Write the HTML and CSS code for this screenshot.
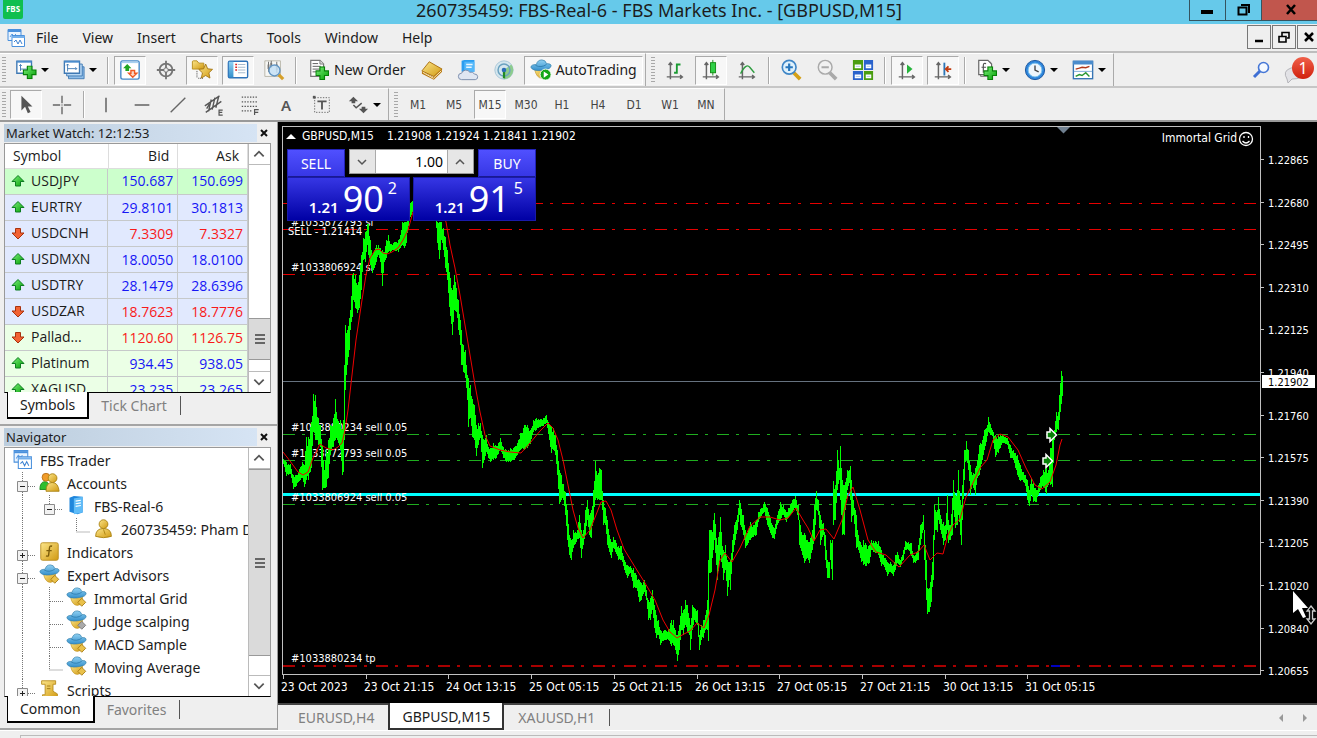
FILE: index.html
```html
<!DOCTYPE html>
<html lang="en">
	<head>
		<meta charset="utf-8">
		<meta name="viewport" content="width=device-width, initial-scale=1.0">
		<title>260735459: FBS-Real-6 - FBS Markets Inc. - [GBPUSD,M15]</title>
		<link rel="stylesheet" href="styles.css">
	</head>

	<body>
		<svg class="defs" aria-hidden="true">
			<linearGradient id="gold" x1="0" y1="0" x2="1" y2="1"><stop offset="0" stop-color="#fbe58a"/><stop offset="1" stop-color="#d19a12"/></linearGradient>
			<linearGradient id="blue" x1="0" y1="0" x2="0" y2="1"><stop offset="0" stop-color="#8fd0f2"/><stop offset="1" stop-color="#3590cc"/></linearGradient>
			<linearGradient id="green" x1="0" y1="0" x2="1" y2="1"><stop offset="0" stop-color="#7df07d"/><stop offset="1" stop-color="#05a005"/></linearGradient>

			<symbol id="i-app" viewBox="0 0 20 20"><path d="M2 1.500h13v11H2z" fill="#eaf4ff" stroke="#4a90dc"/><path d="M2 2h13v2H2z" fill="#4a90dc"/><path d="M4 9l2-3 2 2 2-2" fill="none" stroke="#5b9be0"/><path d="M6 7.500h12.500v11H6z" fill="#fff" stroke="#4a90dc"/><path d="M6 8h12.500v2H6z" fill="#75b0ec"/><path d="M8 14l2-2 2 4 2-4 2 4" fill="none" stroke="#3d82d2"/></symbol>
			<symbol id="i-plus" viewBox="0 0 12 12"><path d="M4 .5h4V4h3.500v4H8v3.500H4V8H.5V4H4z" fill="url(#green)" stroke="#078007"/></symbol>
			<symbol id="i-newchart" viewBox="0 0 24 24"><path d="M2 2.500h16v13H2z" fill="#fff" stroke="#3f79b4" stroke-width="1.500"/><path d="M2 2h16v2H2z" fill="#4b8ccc"/><path d="M6 6v7M4.500 7.500L6 6l1.500 1.500M6 11h8M13 9.500l1.500 1.500" fill="none" stroke="#3f79b4"/><use href="#i-plus" x="8" y="7" width="16" height="15"/></symbol>
			<symbol id="i-profiles" viewBox="0 0 24 24"><path d="M6 8.500h17v13H6z" fill="#8fbde8" stroke="#3f79b4"/><path d="M4 5.500h17v13H4z" fill="#b8d7f3" stroke="#3f79b4"/><path d="M1.500 2.500H18v13H1.500z" fill="#fff" stroke="#3f79b4" stroke-width="1.500"/><path d="M1.500 2H18v2H1.500z" fill="#4b8ccc"/><path d="M5 5.500v8M3.500 7L5 5.500 6.500 7M5 10.500h10M13.500 9l1.500 1.500-1.500 1.500" fill="none" stroke="#3f79b4"/></symbol>
			<symbol id="i-market" viewBox="0 0 24 24"><rect x="2" y="2" width="20" height="20" rx="2" fill="#fff" stroke="#4488c8" stroke-width="1.500"/><path d="M3 3h18v1.500H3z" fill="#a8d0f0"/><path d="M9 5.500l4.500 4.500H11v3H7v-3H4.500z" fill="#1fa51f"/><path d="M15 20l4.500-4.500H17v-3h-4v3h-2.500z" fill="#fbd9c8" stroke="#ef5a24" stroke-width="1.500"/></symbol>
			<symbol id="i-aim" viewBox="0 0 24 24"><g fill="none" stroke="#757575"><circle cx="12" cy="12" r="7" stroke-width="2"/><circle cx="12" cy="12" r="2.500"/><path d="M12 2v8M12 14v8M2 12h8M14 12h8" stroke-width="2"/></g></symbol>
			<symbol id="i-star" viewBox="0 0 24 24"><path d="M1.500 3q0-1 1-1h4l2 2.500h5.500V11H1.500z" fill="url(#gold)" stroke="#b78c1d"/><path d="M6.500 13v8M8 21h5" stroke="#333" stroke-dasharray="1 1"/><path d="M16 5.500l2.200 5.200 5.300.6-4 3.800 1.200 5.700L16 18l-4.700 2.800 1.200-5.700-4-3.800 5.300-.6z" fill="url(#gold)" stroke="#a57614"/></symbol>
			<symbol id="i-navi" viewBox="0 0 24 24"><rect x="1.500" y="2.500" width="21" height="18" rx="1.500" fill="#fff" stroke="#2f72b8" stroke-width="1.500"/><path d="M2 3h5v17H2z" fill="url(#blue)"/><path d="M9 6h2M9 9h2M9 12h2" stroke="#d22" stroke-width="1.500"/><path d="M12 6h8M12 9h8M12 12h8M12 15h8" stroke="#9fb4c8"/></symbol>
			<symbol id="i-tester" viewBox="0 0 24 24"><path d="M2 2h17v17H2z" fill="#f7f7f4" stroke="#b7b3a6"/><path d="M6 3v11M9 2v8M15 3v12" stroke="#666"/><path d="M5 6h2v5H5zM8 4h2v5H8zM14 6h2v6h-2z" fill="#777"/><path d="M17 17l5 5" stroke="#d6a02a" stroke-width="3.500"/><circle cx="12.500" cy="12.500" r="6" fill="#c4e1f6" fill-opacity=".85" stroke="#6395c2" stroke-width="1.500"/></symbol>
			<symbol id="i-doc" viewBox="0 0 24 24"><path d="M3 1.500h10l4 4V19H3z" fill="#fff" stroke="#777" stroke-width="1.300"/><path d="M13 1.500v4h4" fill="#ddd" stroke="#777"/><path d="M5 5h6M5 8h9M5 11h9M5 14h5" stroke="#555"/><use href="#i-plus" x="8" y="8" width="15" height="15"/></symbol>
			<symbol id="i-book" viewBox="0 0 24 24"><path d="M1 13l8-10 14 8-9 8z" fill="url(#gold)" stroke="#a76c0c"/><path d="M1 13l12 6.500L22.500 11l.5 3-9 8.500L1 16z" fill="#b8770f"/><path d="M2 14.500l11.500 6.500 8.500-8" fill="none" stroke="#fff4c8"/></symbol>
			<symbol id="i-cloud" viewBox="0 0 24 24"><path d="M5 2l3-1h11v13H5z" fill="#2a9df0"/><path d="M8 3h11v11H8z" fill="#54b8fa"/><path d="M10 6h7M10 9h6" stroke="#e9f6ff" stroke-width="1.500"/><path d="M5 22.500a3.500 3.500 0 0 1 0-7 5 5 0 0 1 9-1 4 4 0 0 1 5 2 3 3 0 0 1 1 6z" fill="#dfe6f2" stroke="#7588a8"/></symbol>
			<symbol id="i-signal" viewBox="0 0 24 24"><circle cx="12" cy="12" r="10" fill="#d4e6ee" stroke="#a6c5d6"/><path d="M12 12v10a10 10 0 0 0 8-16z" fill="#8dcc8d"/><circle cx="12" cy="12" r="6.500" fill="none" stroke="#6aa1bf" stroke-width="1.600"/><path d="M12 12v9" stroke="#228b22" stroke-width="2.500"/><circle cx="12" cy="12" r="2.500" fill="#2a6db6"/></symbol>
			<symbol id="i-hat" viewBox="0 0 24 24"><path d="M5 11q7 4 14-1 0 11-6 11-6 0-8-10z" fill="url(#gold)" stroke="#c29424" stroke-width=".7"/><path d="M1 9q0-3 6-3 1-5 6-5 4 0 5 4 5 0 5 2 0 4-8 5-12 2-14-3z" fill="url(#blue)" stroke="#3682ae" stroke-width=".8"/><path d="M6 7q6 3 12-1" fill="none" stroke="#2f7fb0"/></symbol>
			<symbol id="i-auto" viewBox="0 0 24 24"><use href="#i-hat"/><circle cx="17" cy="17" r="6" fill="#14a614" stroke="#fff"/><path d="M15 13.500v7l5-3.500z" fill="#fff"/></symbol>
			<symbol id="i-ea" viewBox="0 0 24 24"><use href="#i-hat"/><path d="M18 13l4.500 4.500L18 22l-4.500-4.500z" fill="#eac14a" stroke="#a67a12"/></symbol>
			<symbol id="i-eaoff" viewBox="0 0 24 24"><use href="#i-hat"/><path d="M18 13l4.500 4.500L18 22l-4.500-4.500z" fill="#aaa" stroke="#777"/></symbol>
			<symbol id="axes" viewBox="0 0 24 24"><path d="M7 4v18M3 19.500h17M5 6.500L7 4l2 2.500M17.500 17.500l2.500 2-2.500 2" fill="none" stroke="#666" stroke-width="1.600"/></symbol>
			<symbol id="i-bars" viewBox="0 0 24 24"><use href="#axes"/><path d="M14 5v11M11 15h3M14 6h4" fill="none" stroke="#1a9a32" stroke-width="2"/></symbol>
			<symbol id="i-candle" viewBox="0 0 24 24"><use href="#axes"/><path d="M14 1v17" stroke="#118a11"/><rect x="11.500" y="4" width="5.500" height="11" fill="#2fd046" stroke="#118a11"/></symbol>
			<symbol id="i-line" viewBox="0 0 24 24"><use href="#axes"/><path d="M5 16q6-12 10-7l5 6" fill="none" stroke="#2d9c3f" stroke-width="1.500"/></symbol>
			<symbol id="i-zoomin" viewBox="0 0 24 24"><path d="M15 15l7 7" stroke="#d4a017" stroke-width="4"/><circle cx="10" cy="9" r="7.500" fill="#dff1fc" stroke="#3f86c6" stroke-width="1.800"/><path d="M10 5v8M6 9h8" stroke="#2877bd" stroke-width="2.400"/></symbol>
			<symbol id="i-zoomout" viewBox="0 0 24 24"><path d="M15 15l7 7" stroke="#a9a9a9" stroke-width="4"/><circle cx="10" cy="9" r="7.500" fill="#f1f1f1" stroke="#aaa" stroke-width="1.600"/><path d="M6 9h8" stroke="#aaa" stroke-width="2.200"/></symbol>
			<symbol id="i-tile" viewBox="0 0 24 24"><path d="M1 1h11v11H1zM13 13h10v10H13z" fill="#4a9d10"/><path d="M13 1h10v11H13zM1 13h11v10H1z" fill="#2a63cc"/><path d="M3 6h7v4H3zM15 6h6v4h-6zM3 17h7v4H3zM15 17h6v4h-6z" fill="#fff"/><path d="M4 8h5M16 8h4M4 19h5M16 19h4" stroke="#a8c8e8"/></symbol>
			<symbol id="i-scroll" viewBox="0 0 24 24"><use href="#axes"/><path d="M12 6v10l6-5z" fill="#26b43c"/></symbol>
			<symbol id="i-shift" viewBox="0 0 24 24"><use href="#axes"/><path d="M13.500 4v14" stroke="#2c76b8" stroke-width="2"/><path d="M21 11h-6M18 8l-3 3 3 3" fill="none" stroke="#c23c10" stroke-width="2"/></symbol>
			<symbol id="i-indic" viewBox="0 0 24 24"><path d="M5 3.500h11V19H5z" fill="#ddd" stroke="#777"/><path d="M3 1.500h10l4 4V17H3z" fill="#fff" stroke="#666" stroke-width="1.300"/><path d="M11 5q-3-1-3 2v8M6 9h5" fill="none" stroke="#555" stroke-width="1.300"/><use href="#i-plus" x="8" y="8" width="15" height="15"/></symbol>
			<symbol id="i-clock" viewBox="0 0 24 24"><circle cx="12" cy="12" r="10.500" fill="#2f86dc" stroke="#15529a"/><circle cx="12" cy="12" r="7.500" fill="#eef6fc" stroke="#7cc4ee"/><path d="M12 7v5l4 2" fill="none" stroke="#444" stroke-width="1.500"/></symbol>
			<symbol id="i-tpl" viewBox="0 0 24 24"><rect x="1.500" y="2.500" width="21" height="19" fill="#fff" stroke="#3674b4" stroke-width="1.500"/><path d="M1 2h22v4H1z" fill="#4b8ccc"/><path d="M2 13.500h20" stroke="#7aa9d6"/><path d="M4 11l4-1 3-1 4 .5 4-1.500" fill="none" stroke="#b2381a" stroke-width="1.500"/><path d="M4 19l4-2 3 1 4-3 4 4" fill="none" stroke="#26952e" stroke-width="1.500"/></symbol>
			<symbol id="i-search" viewBox="0 0 18 18"><path d="M2 16l6-6" stroke="#3f6fd4" stroke-width="3"/><circle cx="11.500" cy="6.500" r="5" fill="#f4f9ff" stroke="#4677d6" stroke-width="1.600"/></symbol>

			<symbol id="i-cursor" viewBox="0 0 24 24"><path d="M7 2v16l4-4 3 7 3-1.500-3-6h5z" fill="#555"/></symbol>
			<symbol id="i-cross" viewBox="0 0 24 24"><path d="M12 2v8M12 14v8M2 12h8M14 12h8M11.500 12h1" stroke="#666" stroke-width="1.500"/></symbol>
			<symbol id="i-vline" viewBox="0 0 24 24"><path d="M12 4v16" stroke="#555" stroke-width="1.500"/></symbol>
			<symbol id="i-hline" viewBox="0 0 24 24"><path d="M4 12h16" stroke="#555" stroke-width="1.500"/></symbol>
			<symbol id="i-trend" viewBox="0 0 24 24"><path d="M4 20L20 4" stroke="#666" stroke-width="1.500"/></symbol>
			<symbol id="i-chan" viewBox="0 0 24 24"><path d="M2 13L18 2M3 20L20 8M6 19l3-13M10 17l3-13M14 15l3-12M4 16l3-5" stroke="#555" stroke-width="1.500"/><path d="M21.500 17.500h-4v5.500h4M17.500 20h3.500" fill="none" stroke="#555" stroke-width="1.300"/></symbol>
			<symbol id="i-fibo" viewBox="0 0 24 24"><path d="M3 3.500h18M3 8.500h18M3 13.500h18M3 18.500h11" stroke="#555" stroke-width="1.300" stroke-dasharray="1.500 1.500"/><path d="M21.500 17h-4.500v6M17 20h4" fill="none" stroke="#555" stroke-width="1.300"/></symbol>
			<symbol id="i-label" viewBox="0 0 24 24"><path d="M4 4h16v16H4z" fill="none" stroke="#666" stroke-dasharray="1.500 1.500"/><path d="M2 2h3v3H2z" fill="#555"/><path d="M7 8h10M12 8v9" stroke="#555" stroke-width="2"/></symbol>
			<symbol id="i-arrows" viewBox="0 0 24 24"><path d="M2 8l5-5 5 5H9v2H5V8zM13 16h3v-2h4v2h3l-5 5z" fill="#555"/><path d="M7 12l3 3 6-5" fill="none" stroke="#555" stroke-width="1.600"/></symbol>

			<symbol id="i-up" viewBox="0 0 14 14"><path d="M7 1.500l6 6H9.500V12h-5V7.500H1z" fill="url(#green)" stroke="#0c7d20"/></symbol>
			<symbol id="i-down" viewBox="0 0 14 14"><path d="M7 13L1 7h3.500V2.500h5V7H13z" fill="#f26233" stroke="#a8330e"/></symbol>
			<symbol id="i-users" viewBox="0 0 24 24"><path d="M1 20q0-9 6-9 5 0 5 9z" fill="#2fbe2f" stroke="#168616"/><circle cx="8" cy="6" r="4.500" fill="#f09c2a" stroke="#b8701a"/><path d="M8 22q0-10 7-10t8 10z" fill="url(#gold)" stroke="#a8800f"/><circle cx="15.500" cy="7" r="5" fill="url(#gold)" stroke="#a8800f"/></symbol>
			<symbol id="i-server" viewBox="0 0 24 24"><path d="M4 3l5-2 10 1v18l-6 2-9-3z" fill="#1f86dc"/><path d="M9 4l10-2v18l-10 2z" fill="#5fbcf8"/><path d="M11 7l6-1M11 10l6-1M11 13l6-1" stroke="#fff" stroke-width="1.300"/></symbol>
			<symbol id="i-user" viewBox="0 0 24 24"><path d="M3 21q0-9 9-9t9 9q-9 3-18 0z" fill="url(#gold)" stroke="#a8800f"/><circle cx="12" cy="7" r="5" fill="url(#gold)" stroke="#a8800f"/><path d="M12 13l2 6" stroke="#a8800f"/></symbol>
			<symbol id="i-func" viewBox="0 0 24 24"><rect x="2" y="2" width="20" height="20" rx="2" fill="url(#gold)" stroke="#b78c1d"/><path d="M15 6q-3-1-3 2l-1 8q0 2-3 1M8.500 11h6" fill="none" stroke="#7b5c0a" stroke-width="1.600"/></symbol>
			<symbol id="i-script" viewBox="0 0 24 24"><path d="M3 2h16v4h-3v8l5 3v5H4v-4h3V6H3z" fill="url(#gold)" stroke="#b78c1d"/><path d="M9 8h4M9 11h4" stroke="#9c7512"/></symbol>

			<symbol id="g-v" viewBox="0 0 27 23"><path d="M13.500 0v23" class="dots"/></symbol>
			<symbol id="g-end" viewBox="0 0 27 23"><path d="M13.500 0v14H27" class="dots"/></symbol>
			<symbol id="g-tee" viewBox="0 0 27 23"><path d="M13.500 0v23M14 14.500h13" class="dots"/></symbol>
			<symbol id="g-box" viewBox="0 0 11 11"><path d="M.5.5h10v10H.5z" fill="#f2f2f2" stroke="#8a8a8a"/><path d="M3 5.500h5" stroke="#222"/></symbol>
			<symbol id="g-minus" viewBox="0 0 27 23"><path d="M13.500 0v23M19 14.500h8" class="dots"/><use href="#g-box" x="8" y="9" width="11" height="11"/></symbol>
			<symbol id="g-last" viewBox="0 0 27 23"><path d="M13.500 0v9M19 14.500h8" class="dots"/><use href="#g-box" x="8" y="9" width="11" height="11"/></symbol>
			<symbol id="g-plus" viewBox="0 0 27 23"><path d="M13.500 0v23M19 14.500h8" class="dots"/><use href="#g-box" x="8" y="9" width="11" height="11"/><path d="M13.500 12v5" stroke="#222"/></symbol>
			<symbol id="i-x" viewBox="0 0 10 10"><path d="M2 2l6 6M8 2L2 8" stroke="#111" stroke-width="2"/></symbol>
			<symbol id="c-up" viewBox="0 0 12 12"><path d="M2 8l4-4 4 4" fill="none" stroke="#555" stroke-width="1.500"/></symbol>
			<symbol id="c-down" viewBox="0 0 12 12"><path d="M2 4l4 4 4-4" fill="none" stroke="#555" stroke-width="1.500"/></symbol>
		</svg>

		<header class="titlebar">
			<span class="logo">FBS</span>
			<h1>260735459: FBS-Real-6 - FBS Markets Inc. - [GBPUSD,M15]</h1>
			<div class="winbtns">
				<button aria-label="Minimize"><svg viewBox="0 0 16 16"><path d="M2 10h12" stroke="#000" stroke-width="4"/></svg></button>
				<button aria-label="Restore"><svg viewBox="0 0 16 16"><path d="M3.500 5.500h8v7h-8zM6 3h8v8" fill="none" stroke="#000" stroke-width="2"/></svg></button>
				<button class="close" aria-label="Close"><svg viewBox="0 0 16 16"><path d="M4 3l8 9M12 3l-8 9" stroke="#000" stroke-width="2.500"/></svg></button>
			</div>
		</header>

		<nav class="menubar">
			<svg class="appicon"><use href="#i-app"/></svg>
			<button>File</button>
			<button>View</button>
			<button>Insert</button>
			<button>Charts</button>
			<button>Tools</button>
			<button>Window</button>
			<button>Help</button>
			<div class="mdi">
				<button aria-label="Minimize chart"><svg viewBox="0 0 16 16"><path d="M4 12h8" stroke="#000" stroke-width="2.500"/></svg></button>
				<button aria-label="Restore chart"><svg viewBox="0 0 16 16"><path d="M3 7.500h7v5.500H3zM6 7V3.500h7V9h-2" fill="none" stroke="#000" stroke-width="1.600"/></svg></button>
				<button aria-label="Close chart"><svg viewBox="0 0 16 16"><path d="M4 4l8 8M12 4l-8 8" stroke="#000" stroke-width="2.500"/></svg></button>
			</div>
		</nav>

		<div class="bars">
			<div class="toolbar">
				<i class="grip"></i>
				<button class="drop" aria-label="New chart"><svg><use href="#i-newchart"/></svg></button>
				<button class="drop" aria-label="Profiles"><svg><use href="#i-profiles"/></svg></button>
				<i class="sep"></i>
				<button class="on" aria-label="Market Watch"><svg><use href="#i-market"/></svg></button>
				<button aria-label="Data Window"><svg><use href="#i-aim"/></svg></button>
				<button class="on" aria-label="Navigator"><svg><use href="#i-star"/></svg></button>
				<button class="on" aria-label="Terminal"><svg><use href="#i-navi"/></svg></button>
				<button aria-label="Strategy Tester"><svg><use href="#i-tester"/></svg></button>
				<i class="sep"></i>
				<button class="wide"><svg><use href="#i-doc"/></svg>New Order</button>
				<button aria-label="MetaEditor"><svg><use href="#i-book"/></svg></button>
				<button aria-label="Hosting"><svg><use href="#i-cloud"/></svg></button>
				<button aria-label="Signals"><svg><use href="#i-signal"/></svg></button>
				<button class="wide on"><svg><use href="#i-auto"/></svg>AutoTrading</button>
			</div>
			<div class="toolbar">
				<i class="grip"></i>
				<button aria-label="Bar chart"><svg><use href="#i-bars"/></svg></button>
				<button class="on" aria-label="Candlesticks"><svg><use href="#i-candle"/></svg></button>
				<button aria-label="Line chart"><svg><use href="#i-line"/></svg></button>
				<i class="sep"></i>
				<button aria-label="Zoom in"><svg><use href="#i-zoomin"/></svg></button>
				<button aria-label="Zoom out"><svg><use href="#i-zoomout"/></svg></button>
				<button aria-label="Tile windows"><svg><use href="#i-tile"/></svg></button>
				<i class="sep"></i>
				<button class="on" aria-label="Auto scroll"><svg><use href="#i-scroll"/></svg></button>
				<button class="on" aria-label="Chart shift"><svg><use href="#i-shift"/></svg></button>
				<i class="sep"></i>
				<button class="drop" aria-label="Indicators"><svg><use href="#i-indic"/></svg></button>
				<button class="drop" aria-label="Periods"><svg><use href="#i-clock"/></svg></button>
				<button class="drop" aria-label="Templates"><svg><use href="#i-tpl"/></svg></button>
			</div>
			<div class="notes">
				<button aria-label="Search"><svg class="search"><use href="#i-search"/></svg></button>
				<button class="bell" aria-label="Messages"><svg viewBox="0 0 22 20"><path d="M3 15q-5-8 4-11 12-3 12 5 0 6-11 6l-4 4z" fill="#e2e2e6" stroke="#b5b5ba"/></svg><span>1</span></button>
			</div>
		</div>

		<div class="bars second">
			<div class="toolbar">
				<i class="grip"></i>
				<button class="on" aria-label="Cursor"><svg><use href="#i-cursor"/></svg></button>
				<button aria-label="Crosshair"><svg><use href="#i-cross"/></svg></button>
				<i class="sep"></i>
				<button aria-label="Vertical line"><svg><use href="#i-vline"/></svg></button>
				<button aria-label="Horizontal line"><svg><use href="#i-hline"/></svg></button>
				<button aria-label="Trendline"><svg><use href="#i-trend"/></svg></button>
				<button aria-label="Equidistant channel"><svg><use href="#i-chan"/></svg></button>
				<button aria-label="Fibonacci"><svg><use href="#i-fibo"/></svg></button>
				<button class="letter">A</button>
				<button aria-label="Text label"><svg><use href="#i-label"/></svg></button>
				<button class="drop" aria-label="Arrows"><svg><use href="#i-arrows"/></svg></button>
			</div>
			<div class="toolbar periods">
				<i class="grip"></i>
				<button>M1</button>
				<button>M5</button>
				<button class="on">M15</button>
				<button>M30</button>
				<button>H1</button>
				<button>H4</button>
				<button>D1</button>
				<button>W1</button>
				<button>MN</button>
			</div>
		</div>

		<main>
			<aside>
				<section class="panel">
					<header><h2>Market Watch: 12:12:53</h2><button aria-label="Close Market Watch"><svg><use href="#i-x"/></svg></button></header>
					<div class="box">
						<div class="scrollarea">
							<table>
								<thead><tr><th>Symbol</th><th>Bid</th><th>Ask</th></tr></thead>
								<tbody>
									<tr class="sel up"><td><svg><use href="#i-up"/></svg>USDJPY</td><td>150.687</td><td>150.699</td></tr>
									<tr class="up"><td><svg><use href="#i-up"/></svg>EURTRY</td><td>29.8101</td><td>30.1813</td></tr>
									<tr class="down"><td><svg><use href="#i-down"/></svg>USDCNH</td><td>7.3309</td><td>7.3327</td></tr>
									<tr class="up"><td><svg><use href="#i-up"/></svg>USDMXN</td><td>18.0050</td><td>18.0100</td></tr>
									<tr class="up"><td><svg><use href="#i-up"/></svg>USDTRY</td><td>28.1479</td><td>28.6396</td></tr>
									<tr class="down"><td><svg><use href="#i-down"/></svg>USDZAR</td><td>18.7623</td><td>18.7776</td></tr>
									<tr class="metal down"><td><svg><use href="#i-down"/></svg>Pallad...</td><td>1120.60</td><td>1126.75</td></tr>
									<tr class="metal up"><td><svg><use href="#i-up"/></svg>Platinum</td><td>934.45</td><td>938.05</td></tr>
									<tr class="metal up"><td><svg><use href="#i-up"/></svg>XAGUSD</td><td>23.235</td><td>23.265</td></tr>
								</tbody>
							</table>
						</div>
						<div class="scroll">
							<button aria-label="Scroll up"><svg><use href="#c-up"/></svg></button>
							<i class="track low"></i>
							<i class="thumb"></i>
							<i class="track"></i>
							<button aria-label="Scroll down"><svg><use href="#c-down"/></svg></button>
						</div>
					</div>
					<div class="tabs"><button class="active">Symbols</button><button>Tick Chart</button></div>
				</section>

				<section class="panel">
					<header><h2>Navigator</h2><button aria-label="Close Navigator"><svg><use href="#i-x"/></svg></button></header>
					<div class="box">
						<ul class="tree scrollarea">
							<li><svg class="ico"><use href="#i-app"/></svg>FBS Trader</li>
							<li><svg><use href="#g-minus"/></svg><svg class="ico"><use href="#i-users"/></svg>Accounts</li>
							<li><svg><use href="#g-v"/></svg><svg><use href="#g-last"/></svg><svg class="ico"><use href="#i-server"/></svg>FBS-Real-6</li>
							<li><svg><use href="#g-v"/></svg><svg></svg><svg><use href="#g-end"/></svg><svg class="ico"><use href="#i-user"/></svg>260735459: Pham D</li>
							<li><svg><use href="#g-plus"/></svg><svg class="ico"><use href="#i-func"/></svg>Indicators</li>
							<li><svg><use href="#g-minus"/></svg><svg class="ico"><use href="#i-ea"/></svg>Expert Advisors</li>
							<li><svg><use href="#g-v"/></svg><svg><use href="#g-tee"/></svg><svg class="ico"><use href="#i-ea"/></svg>Immortal Grid</li>
							<li><svg><use href="#g-v"/></svg><svg><use href="#g-tee"/></svg><svg class="ico"><use href="#i-eaoff"/></svg>Judge scalping</li>
							<li><svg><use href="#g-v"/></svg><svg><use href="#g-tee"/></svg><svg class="ico"><use href="#i-ea"/></svg>MACD Sample</li>
							<li><svg><use href="#g-v"/></svg><svg><use href="#g-end"/></svg><svg class="ico"><use href="#i-ea"/></svg>Moving Average</li>
							<li><svg><use href="#g-plus"/></svg><svg class="ico"><use href="#i-script"/></svg>Scripts</li>
						</ul>
						<div class="scroll">
							<button aria-label="Scroll up"><svg><use href="#c-up"/></svg></button>
							<i class="thumb tall"></i>
							<i class="track"></i>
							<button aria-label="Scroll down"><svg><use href="#c-down"/></svg></button>
						</div>
					</div>
					<div class="tabs"><button class="active">Common</button><button>Favorites</button></div>
				</section>
			</aside>

			<section class="work">
				<div class="chart">
					<svg id="plot" viewBox="278 122 1039 581" role="img" aria-label="GBPUSD M15 chart">
						<g id="levels"></g>
						<g id="labels">
							<text x="291" y="226">#1033872793 sl</text>
							<text x="288" y="235">SELL - 1.21414</text>
							<text x="291" y="271">#1033806924 sl</text>
							<text x="291" y="431">#1033880234 sell 0.05</text>
							<text x="291" y="457">#1033872793 sell 0.05</text>
							<text x="291" y="501">#1033806924 sell 0.05</text>
							<text x="291" y="662">#1033880234 tp</text>
						</g>
						<path id="bars" class="bar"/>
						<polyline id="ma" class="ma"/>
						<g class="deal"><path d="M1047 432h3v-3.500l6.500 6.500-6.500 6.500V438h-3zM1043 458h3v-3.500l6.500 6.500-6.500 6.500V464h-3z"/></g>
						<path d="M282.500 675V126.500H1260.500V675M282 674.500h979" class="frame"/>
						<path d="M286 139l5-5 5 5z" fill="#fff"/>
						<path d="M1057 127h13l-6.500 6.500z" fill="#6f7f8f"/>
						<text x="302" y="140" class="big">GBPUSD,M15</text>
						<text x="387" y="140" class="big">1.21908 1.21924 1.21841 1.21902</text>
						<text x="1237" y="142" class="big" text-anchor="end">Immortal Grid</text>
						<g fill="none" stroke="#fff" stroke-width="1.300"><circle cx="1246" cy="139" r="6.500"/><path d="M1242.500 141q3.500 4 7 0M1244 136v2M1248.500 136v2"/></g>
						<g id="axis"></g>
						<path d="M1262 375h53v13h-53z" fill="#fff"/>
						<text x="1268" y="386" class="now">1.21902</text>
						<path d="M1293 591v22l5-4 5 9 3-1-4-9h6z" fill="#fff"/>
						<path d="M1311 606l4 5h-2.500v8h2.500l-4 5-4-5h2.500v-8H1307z" fill="#000" stroke="#ccc" stroke-width="1.300"/>
					</svg>

					<form class="trade">
						<button type="button" class="side">SELL</button>
						<div class="lot">
							<button type="button" aria-label="Decrease"><svg><use href="#c-down"/></svg></button>
							<input type="text" value="1.00" aria-label="Volume">
							<button type="button" aria-label="Increase"><svg><use href="#c-up"/></svg></button>
						</div>
						<button type="button" class="side">BUY</button>
						<button type="button" class="quote"><small>1.21</small><b>90</b><sup>2</sup></button>
						<button type="button" class="quote"><small>1.21</small><b>91</b><sup>5</sup></button>
					</form>
				</div>
				<div class="charttabs">
					<button>EURUSD,H4</button>
					<button class="active">GBPUSD,M15</button>
					<button>XAUUSD,H1</button>
					<div class="pager">
						<button aria-label="Previous tabs"><svg viewBox="0 0 8 10"><path d="M6 1v8L2 5z" fill="#999"/></svg></button>
						<button aria-label="Next tabs"><svg viewBox="0 0 8 10"><path d="M2 1v8l4-4z" fill="#999"/></svg></button>
					</div>
				</div>
			</section>
		</main>
		<footer></footer>

		<script src="chart.js"></script>
	</body>
</html>
```
FILE: styles.css
```css
*{
	box-sizing: border-box;
}
body{
	margin: 0;
	height: 100vh;
	display: flex;
	flex-direction: column;
	overflow: hidden;
	background: #efefef;
	color: #1c1c1c;
	font: 14px/20px "Noto Sans", "Open Sans", sans-serif;
}
button{
	margin: 0;
	padding: 0;
	border: 0;
	background: none;
	color: inherit;
	font: inherit;
	white-space: nowrap;
}
h1, h2{
	margin: 0;
	font-weight: normal;
}
svg{
	display: block;
	flex: none;
}
.defs{
	position: absolute;
	width: 0;
	height: 0;
}
.titlebar{
	display: flex;
	align-items: flex-start;
	height: 24px;
	padding-left: 3px;
	background: #66c9ea;
}
.logo{
	width: 20px;
	height: 19px;
	border-radius: 0 0 2px 2px;
	background: #0fbf4f;
	color: #fff;
	font-size: 8px;
	font-weight: bold;
	line-height: 17px;
	text-align: center;
}
.titlebar h1{
	flex: 1;
	padding-left: 106px;
	font-size: 18px;
	line-height: 21px;
	text-align: center;
	white-space: nowrap;
}
.winbtns{
	display: flex;
	height: 21px;
	border: 1px solid #35545f;
	border-width: 0 0 1px 1px;
}
.winbtns button{
	width: 36px;
	padding-left: 9px;
	border-right: 1px solid #35545f;
}
.winbtns svg{
	width: 16px;
	height: 16px;
}
.winbtns .close{
	width: 55px;
	padding-left: 21px;
	border: 0;
	background: #c1564d;
}
.menubar{
	display: flex;
	align-items: center;
	gap: 24px;
	height: 29px;
	padding-left: 6px;
	border-bottom: 2px solid #bdbdbd;
}
.appicon{
	width: 20px;
	height: 20px;
	margin-right: -14px;
}
.mdi{
	display: flex;
	gap: 1px;
	margin: 1px -4px auto auto;
}
.mdi button{
	width: 24px;
	height: 24px;
	padding: 3px;
	border: 1px solid #777;
}
.bars{
	display: flex;
	height: 35px;
	border-bottom: 2px solid #c6c6c6;
}
.second{
	height: 34px;
	border-bottom-color: #999;
}
.toolbar{
	display: flex;
	align-items: center;
	gap: 4px;
	padding: 0 2px;
	border-top: 1px solid #fff;
	border-right: 1px solid #aaa;
}
.toolbar + .toolbar{
	padding-left: 5px;
}
.grip{
	width: 4px;
	height: 26px;
	background: repeating-linear-gradient(#a8a8a8 0 1px, #efefef 1px 3px);
}
.sep{
	width: 2px;
	height: 27px;
	margin: 0 1px;
	border-left: 1px solid #aaa;
	border-right: 1px solid #fff;
}
.toolbar button{
	display: flex;
	align-items: center;
	justify-content: center;
	gap: 4px;
	width: 32px;
	height: 29px;
	border: 1px solid transparent;
}
.toolbar svg{
	width: 22px;
	height: 22px;
}
.toolbar .on{
	border-color: #aaa #fff #fff #aaa;
	background: #f7f7f7;
}
.toolbar .drop{
	width: 44px;
	justify-content: flex-start;
	padding-left: 4px;
}
.drop::after{
	content: "";
	border: 4px solid transparent;
	border-top-color: #000;
	border-bottom: 0;
}
.toolbar .wide{
	width: auto;
	padding: 0 5px;
}
.notes{
	display: flex;
	align-items: center;
	gap: 12px;
	margin-left: auto;
	padding-right: 3px;
}
.search{
	width: 18px;
	height: 18px;
}
.bell{
	position: relative;
	width: 32px;
	height: 30px;
}
.bell svg{
	width: 22px;
	height: 20px;
	margin-top: 8px;
	margin-left: 2px;
}
.bell span{
	position: absolute;
	top: 2px;
	right: 0;
	width: 22px;
	height: 22px;
	border-radius: 50%;
	background: linear-gradient(#f0604a, #d0200c);
	color: #fff;
	font-size: 16px;
	line-height: 22px;
}
.toolbar .letter{
	color: #555;
	font-weight: 600;
	font-size: 15px;
}
.periods button{
	color: #444;
	font-family: "DejaVu Sans Condensed", "DejaVu Sans", sans-serif;
	font-size: 12px;
}
main{
	flex: 1;
	display: flex;
	min-height: 0;
}
aside{
	display: flex;
	flex-direction: column;
	flex: none;
	width: 278px;
	border-right: 1px solid #999;
}
.panel{
	flex: 1;
	display: flex;
	flex-direction: column;
	min-height: 0;
	padding: 1px 6px 5px 4px;
	border-bottom: 2px solid #a5a5a5;
}
.panel header{
	display: flex;
	align-items: center;
	height: 20px;
}
.panel h2{
	flex: 1;
	padding-left: 2px;
	background: linear-gradient(90deg, #bccddd, #d6e4f4);
	font-size: 13px;
	line-height: 18px;
}
.panel header button{
	width: 14px;
	height: 14px;
	padding: 2px;
}
.panel header svg{
	width: 10px;
	height: 10px;
}
.box{
	flex: 1;
	display: flex;
	min-height: 0;
	border: 1px solid #999;
	border-bottom-color: #000;
	background: #fff;
}
.scrollarea{
	flex: 1;
	min-width: 0;
	overflow: hidden;
}
table{
	width: 100%;
	table-layout: fixed;
	border-collapse: collapse;
	font-family: "Open Sans", "Noto Sans", sans-serif;
}
th{
	height: 24px;
	padding: 0 8px;
	border: 1px solid #ddd;
	border-width: 0 1px 1px 0;
	font-weight: normal;
	text-align: right;
}
th:first-child{
	width: 103px;
	text-align: left;
}
td{
	height: 26px;
	padding: 0 4px;
	border: 1px solid #c6c9ca;
	border-width: 0 1px 1px 0;
	background: #e1e9fe;
	text-align: right;
}
td:first-child{
	display: flex;
	align-items: center;
	gap: 6px;
	padding-left: 6px;
	color: #1c1c1c;
}
td svg{
	width: 14px;
	height: 14px;
}
.sel td{
	background: #ccffcc;
}
.metal td{
	background: #ebffe6;
}
.up{
	color: #1616f5;
}
.down{
	color: #f81a1a;
}
.scroll{
	display: flex;
	flex-direction: column;
	width: 22px;
	border-left: 1px solid #bbb;
}
.scroll button{
	height: 21px;
	padding-left: 3px;
	border-bottom: 1px solid #bbb;
}
.scroll button:last-child{
	border-top: 1px solid #bbb;
	border-bottom: 0;
}
.scroll svg{
	width: 14px;
	height: 14px;
}
.track{
	flex: 1;
}
.low{
	flex: 14;
}
.thumb{
	height: 42px;
	border: 1px solid #999;
	border-width: 1px 0;
	background: repeating-linear-gradient(#666 0 2px, transparent 2px 4px) center / 10px 10px no-repeat #dadada;
}
.tall{
	flex: 10;
}
.tabs{
	display: flex;
	height: 26px;
	padding-left: 3px;
	color: #808080;
}
.tabs button{
	padding: 0 12px;
}
.tabs .active{
	margin-top: -1px;
	border: 1px solid #000;
	border-width: 0 2px 2px 1px;
	background: #fff;
	color: #1c1c1c;
}
.tabs button:last-child::after{
	content: "";
	margin-left: 13px;
	border-left: 1px solid #555;
}
.tree{
	margin: 0;
	padding: 1px 0 0 4px;
	list-style: none;
	line-height: 23px;
}
.tree li{
	display: flex;
	height: 23px;
	white-space: nowrap;
}
.tree svg{
	width: 27px;
	height: 23px;
}
.tree .ico{
	height: 21px;
	margin-right: 4px;
}
.dots{
	fill: none;
	stroke: #777;
	stroke-dasharray: 1 1;
}
.work{
	flex: 1;
	display: flex;
	flex-direction: column;
	min-width: 0;
}
.chart{
	position: relative;
	flex: 1;
	min-height: 0;
	background: #000;
}
#plot{
	width: 100%;
	height: 100%;
}
#plot text{
	fill: #fff;
	font: 11px "DejaVu Sans Condensed", "DejaVu Sans", sans-serif;
}
#plot .big{
	font-size: 12px;
}
#plot .now{
	fill: #000;
}
.frame{
	fill: none;
	stroke: #c0c0c0;
	shape-rendering: crispEdges;
}
.bar{
	fill: none;
	stroke: #00ff00;
	shape-rendering: crispEdges;
}
.ma{
	fill: none;
	stroke: #f00000;
}
.deal{
	fill: #078007;
	stroke: #fff;
	stroke-width: 1.5;
}
#levels{
	shape-rendering: crispEdges;
}
.loss{
	stroke: #e60000;
	stroke-dasharray: 12 7 3 9;
}
.profit{
	stroke: #a80000;
	stroke-width: 2;
	stroke-dasharray: 12 7 3 9;
}
.order{
	stroke: #1fae1f;
	stroke-dasharray: 12 7 3 9;
}
.price{
	stroke: #66727f;
}
.grid{
	stroke: #00ffff;
	stroke-width: 3;
}
.trade{
	position: absolute;
	top: 27px;
	left: 9px;
	display: grid;
	grid-template-columns: 58px 125px 58px;
	grid-template-rows: 28px 44px;
	column-gap: 4px;
	width: 249px;
	color: #fff;
}
.side{
	border: 1px solid #2222b8;
	border-bottom: 0;
	background: linear-gradient(#5050ff, #3636e4);
	box-shadow: inset 0 -1px #1a1a90;
	line-height: 24px;
}
.lot{
	display: flex;
	height: 25px;
	border: 1px solid #999;
}
.lot button{
	width: 25px;
	padding-left: 6px;
	background: #e6e6e6;
}
.lot svg{
	width: 12px;
	height: 12px;
}
.lot input{
	flex: 1;
	width: 0;
	padding: 0 4px;
	border: 1px solid #aaa;
	border-width: 0 1px;
	background: #fff;
	font: inherit;
	text-align: right;
}
.quote{
	display: flex;
	align-items: flex-end;
	justify-content: flex-end;
	gap: 4px;
	width: 123px;
	height: 44px;
	padding-right: 12px;
	border: 1px solid #1a1aa8;
	background: linear-gradient(#3636e4, #0000a4);
}
.quote:last-child{
	grid-column: 2 / 4;
	justify-self: end;
}
.quote small{
	font-size: 15px;
	font-weight: 600;
	line-height: 26px;
}
.quote b{
	font-size: 36px;
	font-weight: normal;
	line-height: 42px;
}
.quote sup{
	align-self: flex-start;
	font-size: 16px;
	line-height: 20px;
}
.charttabs{
	display: flex;
	height: 27px;
	border-top: 2px solid #444;
	color: #808080;
}
.charttabs button{
	padding: 0 14px;
}
.charttabs button:first-child{
	padding-left: 20px;
}
.charttabs .active{
	margin-top: -2px;
	border: 2px solid #333;
	border-top: 0;
	padding: 2px 12px 0 12px;
	background: #fff;
	color: #1c1c1c;
}
.charttabs .active + button{
	margin: 4px 0;
	border-right: 1px solid #555;
	line-height: 16px;
}
.pager{
	display: flex;
	margin-left: auto;
}
.pager button, .charttabs .pager button:first-child{
	padding: 0 8px;
}
.pager svg{
	width: 8px;
	height: 10px;
}
footer{
	height: 8px;
	border-top: 1px solid #fff;
}
footer::after{
	content: "";
	display: block;
	height: 4px;
	margin: 4px 0 0 20px;
	border: 1px solid #bbb;
	border-width: 1px 0 0 1px;
}
```
FILE: chart.js
```javascript
// x, high, low
const bars = [
	283,459,464, 286,462,476, 290,464,474, 293,475,489, 296,475,486, 299,469,481, 302,462,478, 304,465,487, 306,437,480,
	308,437,480, 311,422,468, 313,394,432, 315,395,440, 318,418,445, 320,425,447, 322,446,490, 324,470,488, 326,450,487,
	328,440,478, 330,425,455, 333,418,447, 335,399,440, 337,419,440, 340,420,450, 342,430,475, 343,420,472, 344,365,440,
	345,325,390, 347,330,365, 349,318,350, 350,310,330, 352,275,317, 353,273,300, 355,275,308, 357,285,313, 359,275,308,
	361,255,290, 363,238,260, 365,232,262, 367,224,245, 368,224,255, 370,240,265, 372,255,273, 374,250,268, 376,245,262,
	378,245,255, 380,248,262, 382,250,286, 384,252,262, 386,240,258, 388,235,252, 390,244,252, 394,242,250, 398,240,252,
	400,235,248, 402,222,245, 404,222,248, 406,222,243, 409,205,218, 415,190,210, 435,190,215, 437,222,243, 439,222,259,
	441,222,240, 443,228,250, 445,237,268, 447,250,280, 449,272,307, 452,290,335, 454,275,310, 456,288,312, 458,300,330,
	460,320,345, 461,330,365, 463,345,372, 465,350,378, 467,375,400, 468,378,427, 470,385,418, 472,399,437, 474,405,440,
	476,425,456, 478,423,445, 480,423,438, 482,435,468, 484,440,460, 486,435,452, 488,447,458, 490,448,462, 493,443,460,
	496,446,458, 500,438,450, 503,447,458, 506,450,462, 510,448,462, 514,447,460, 517,443,455, 520,433,450, 524,425,450,
	527,425,448, 530,430,444, 533,420,432, 536,418,430, 540,419,427, 543,418,426, 546,415,423, 549,425,440, 551,427,453,
	553,428,450, 555,435,455, 557,450,475, 559,470,504, 561,475,500, 563,484,500, 565,492,515, 567,510,540, 569,535,555,
	571,540,560, 573,530,548, 576,533,542, 579,515,538, 581,530,558, 583,530,545, 585,510,535, 587,500,520, 589,515,535,
	591,510,538, 593,490,520, 595,461,500, 597,475,500, 599,468,500, 601,470,500, 603,500,525, 605,508,525, 607,520,545,
	609,535,552, 611,542,558, 613,537,548, 615,540,552, 618,546,560, 621,546,560, 624,560,570, 627,565,578, 630,566,573,
	633,568,588, 636,575,588, 639,580,602, 641,583,600, 644,580,592, 646,590,600, 648,600,620, 650,598,620, 652,590,610,
	654,605,628, 656,615,638, 658,620,635, 660,630,645, 664,630,640, 668,630,640, 671,620,646, 673,620,645, 675,630,650,
	677,635,661, 679,625,650, 681,606,630, 683,610,635, 685,600,625, 687,605,632, 689,618,635, 690,625,650, 692,605,630,
	694,608,620, 697,610,625, 699,635,650, 701,625,640, 703,620,638, 705,615,630, 707,600,630, 708,560,641, 709,530,573,
	711,530,572, 714,513,540, 717,545,580, 720,517,555, 723,550,580, 725,545,570, 727,560,596, 729,562,580, 730,560,590,
	732,540,560, 734,525,545, 737,515,530, 739,500,515, 740,503,525, 743,515,535, 745,530,548, 747,533,545, 750,522,540,
	753,525,537, 756,520,535, 758,512,522, 761,508,516, 764,502,512, 767,508,525, 769,515,530, 772,525,538, 774,528,539,
	777,515,525, 780,502,520, 783,505,515, 786,512,522, 788,508,518, 792,500,512, 795,496,508, 798,505,520, 799,520,545,
	802,535,555, 804,533,563, 807,540,558, 809,542,563, 812,530,550, 814,505,540, 816,491,510, 818,500,515, 820,515,545,
	823,523,535, 825,535,560, 827,560,578, 829,562,578, 830,540,560, 832,540,580, 833,481,525, 835,485,520, 837,450,490,
	839,468,480, 840,446,500, 842,480,535, 844,485,535, 845,482,510, 847,470,490, 849,470,483, 850,466,500, 851,480,522,
	853,500,515, 856,515,548, 858,535,550, 861,545,562, 863,540,565, 866,545,566, 869,545,563, 871,540,550, 873,541,552,
	878,541,555, 881,550,566, 883,555,565, 886,560,572, 887,562,576, 890,562,572, 893,565,576, 895,555,570, 897,552,563,
	900,560,567, 903,550,560, 905,541,550, 908,542,550, 911,543,556, 913,555,563, 915,555,563, 918,545,560, 920,525,545,
	923,515,530, 924,530,560, 926,560,600, 927,588,614, 929,588,612, 931,575,602, 933,535,580, 934,505,540, 935,510,530,
	937,510,532, 938,497,520, 940,515,530, 943,522,545, 945,525,540, 947,495,530, 948,520,543, 950,525,540, 952,498,535,
	953,480,510, 955,495,528, 957,490,525, 958,470,515, 960,500,535, 961,505,545, 962,485,520, 964,450,480, 965,450,462,
	966,441,460, 968,450,470, 970,465,495, 972,475,485, 975,468,495, 977,460,478, 979,445,475, 982,440,460, 984,430,450,
	986,428,442, 988,417,432, 990,424,435, 992,430,436, 995,435,457, 998,435,453, 1002,435,443, 1007,438,445, 1010,445,458,
	1013,450,460, 1017,455,475, 1019,463,480, 1023,472,482, 1025,475,486, 1027,480,500, 1029,490,506, 1031,478,495,
	1033,483,502, 1036,490,502, 1038,485,495, 1040,477,490, 1043,470,487, 1046,468,494, 1048,470,485, 1050,448,485,
	1052,440,487, 1054,430,440, 1056,412,432, 1058,412,430, 1059,395,420, 1061,371,404, 1062,376,396
];

const average = "283,452 290,461 298,472 303,475 308,472 313,458 320,444 326,448 333,450 338,447 342,443 345,430 348,410 352,375 356,340 359,320 362,300 366,275 370,258 375,250 379,249 383,253 387,254 392,252 398,248 403,240 408,230 413,212 425,190 440,205 446,222 450,245 455,268 460,295 465,325 470,355 475,385 480,412 485,435 490,446 500,450 510,452 521,453 530,443 540,431 548,423 553,428 558,440 563,460 568,485 573,510 578,528 583,538 590,530 596,515 601,502 606,501 611,510 617,530 624,549 635,567 645,583 655,600 663,620 670,632 677,638 684,634 690,631 697,623 704,628 709,615 715,590 720,560 725,553 732,562 740,548 750,526 760,517 770,517 780,520 788,518 796,508 803,520 808,528 814,541 820,530 826,529 834,539 842,520 848,495 853,487 860,510 868,540 876,552 886,555 899,567 910,555 918,552 924,545 930,560 937,553 943,554 948,535 953,525 960,519 966,497 972,485 980,468 987,460 993,440 1000,434 1008,437 1018,450 1026,468 1035,485 1042,489 1050,482 1056,465 1060,445 1062,439";

const levels = [
	["loss", 203.5], ["loss", 229.5], ["loss", 274.5], ["profit", 666],
	["order", 434.5], ["order", 460.5], ["order", 504.5],
	["price", 381.5], ["grid", 494.5]
];
const prices = ["1.22865", "1.22680", "1.22495", "1.22310", "1.22125", "1.21940", "1.21760", "1.21575", "1.21390", "1.21205", "1.21020", "1.20840", "1.20655"];
const times = ["23 Oct 2023", "23 Oct 21:15", "24 Oct 13:15", "25 Oct 05:15", "25 Oct 21:15", "26 Oct 13:15", "27 Oct 05:15", "27 Oct 21:15", "30 Oct 13:15", "31 Oct 05:15"];

let d = "";
for(let i=0; i<bars.length; i+=3){
	const [x, hi, lo, nx, nhi, nlo] = bars.slice(i, i+6);
	d += `M${x+.5} ${hi}V${lo}`;
	// fill the columns up to the next bar
	for(let c=x+1; c<nx; c++){
		const t = (c-x)/(nx-x);
		const h = hi+(nhi-hi)*t;
		const l = lo+(nlo-lo)*t;
		const cut = (c*7%5)/20*(l-h);
		d += `M${c+.5} ${Math.round(h+cut)}V${Math.round(l-cut/2)}`;
	}
}
document.querySelector("#bars").setAttribute("d", d);
document.querySelector("#ma").setAttribute("points", average);

document.querySelector("#levels").innerHTML = levels.map(([type, y])=>
	`<path class="${type}" d="M283 ${y}H1260"/>`
).join("") + `<path d="M1051 666h9" stroke="#0000c0" stroke-width="2"/>`;

let axis = "";
prices.forEach((p, i)=>{
	const y = Math.round(160 + i*42.6);
	axis += `<path class="frame" d="M1261 ${y-.5}h3"/><text x="1268" y="${y+4}">${p}</text>`;
});
times.forEach((t, i)=>{
	const x = Math.round(283 + i*82.7);
	axis += `<path class="frame" d="M${x+.5} 675v4"/><text class="big" x="${x-2}" y="691">${t}</text>`;
});
document.querySelector("#axis").innerHTML = axis;
```
